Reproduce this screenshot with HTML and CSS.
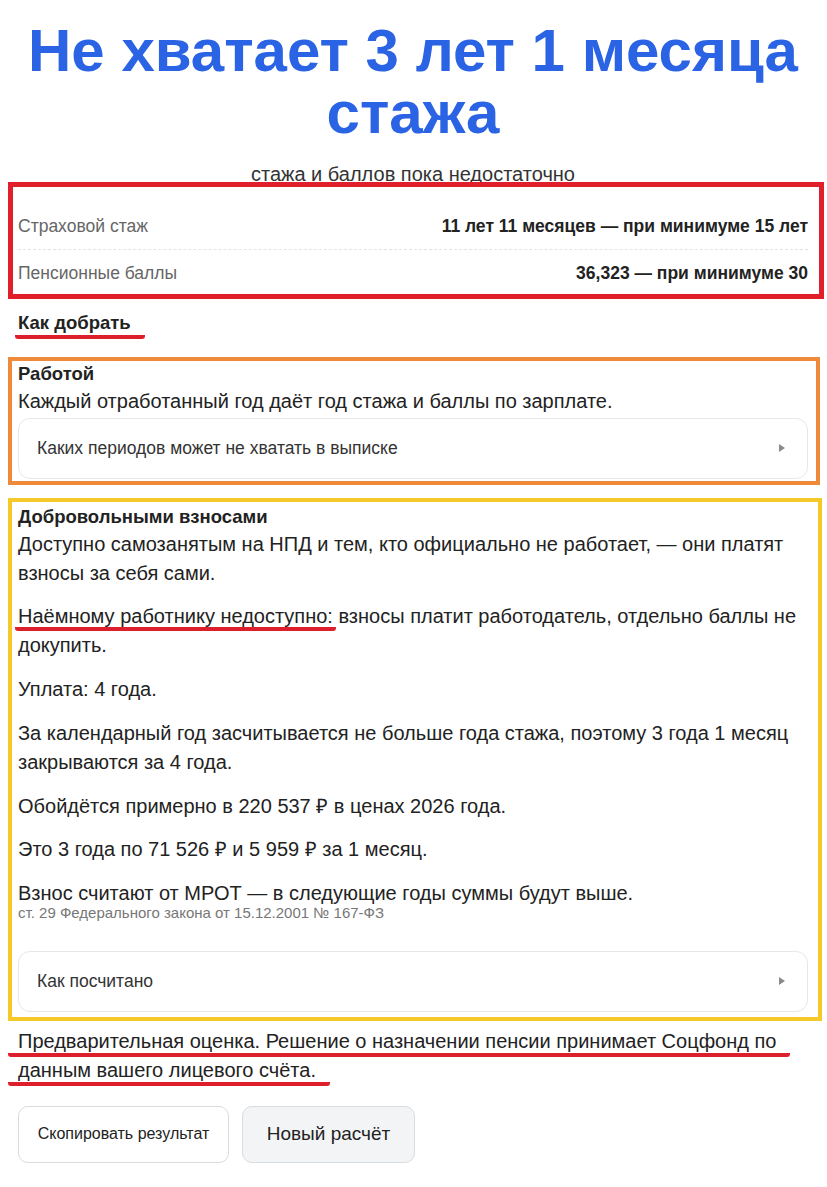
FILE: index.html
```html
<!DOCTYPE html>
<html lang="ru">
<head>
<meta charset="utf-8">
<title>Результат</title>
<link rel="stylesheet" href="styles.css">
</head>
<body>
<main class="page">
  <h1 class="title">Не хватает 3 лет 1 месяца стажа</h1>
  <p class="subtitle">стажа и баллов пока недостаточно</p>

  <section class="summary mark-red">
    <div class="row">
      <span class="label">Страховой стаж</span>
      <span class="value">11 лет 11 месяцев — при минимуме 15 лет</span>
    </div>
    <div class="row">
      <span class="label">Пенсионные баллы</span>
      <span class="value">36,323 — при минимуме 30</span>
    </div>
  </section>

  <h2 class="section-title"><span class="uline">Как добрать</span></h2>

  <section class="option mark-orange">
    <h3 class="option-title">Работой</h3>
    <p class="text">Каждый отработанный год даёт год стажа и баллы по зарплате.</p>
    <details class="disclosure">
      <summary>Каких периодов может не хватать в выписке</summary>
    </details>
  </section>

  <section class="option mark-yellow">
    <h3 class="option-title">Добровольными взносами</h3>
    <p class="text">Доступно самозанятым на НПД и тем, кто официально не работает, — они платят взносы за себя сами.</p>
    <p class="text"><span class="uline">Наёмному работнику недоступно:</span> взносы платит работодатель, отдельно баллы не докупить.</p>
    <p class="text">Уплата: 4 года.</p>
    <p class="text">За календарный год засчитывается не больше года стажа, поэтому 3 года 1 месяц закрываются за 4 года.</p>
    <p class="text">Обойдётся примерно в 220 537 ₽ в ценах 2026 года.</p>
    <p class="text">Это 3 года по 71 526 ₽ и 5 959 ₽ за 1 месяц.</p>
    <p class="text last">Взнос считают от МРОТ — в следующие годы суммы будут выше.</p>
    <p class="cite">ст. 29 Федерального закона от 15.12.2001 № 167-ФЗ</p>
    <details class="disclosure">
      <summary>Как посчитано</summary>
    </details>
  </section>

  <p class="note"><span class="uline wide">Предварительная оценка. Решение о назначении пенсии принимает Соцфонд по данным вашего лицевого счёта.</span></p>

  <div class="actions">
    <button class="btn btn-light" type="button">Скопировать результат</button>
    <button class="btn btn-gray" type="button">Новый расчёт</button>
  </div>
</main>
</body>
</html>
```

FILE: styles.css
```css
* { box-sizing: border-box; }
html, body { margin: 0; padding: 0; background: #fff; }
body {
  font-family: "Liberation Sans", Arial, sans-serif;
  color: #222;
}
.page {
  width: 827px;
  padding: 20px 19px 20px 18px;
}
.title {
  margin: 0;
  text-align: center;
  font-size: 60px;
  line-height: 62px;
  font-weight: 700;
  color: #2a63e3;
}
.subtitle {
  margin: 20px 0 0;
  text-align: center;
  font-size: 20px;
  line-height: 20px;
  color: #333;
}
.mark-red {
  position: relative;
  border: 5px solid #e11f2b;
  margin: -2px -16px 0 -10px;
  padding: 16px 11px 0 5px;
}
.row {
  display: flex;
  justify-content: space-between;
  align-items: center;
  padding: 13px 0;
  font-size: 17.5px;
  line-height: 20px;
}
.row + .row { border-top: 1px dashed #e2e4e8; padding-bottom: 11px; }
.label { color: #666; }
.value { font-weight: 700; color: #222; }
.section-title {
  margin: 13px 0 0;
  font-size: 18.5px;
  line-height: 22px;
  font-weight: 700;
  color: #222;
}
.uline {
  background: linear-gradient(#dd1f2b, #dd1f2b) no-repeat left bottom / 100% 4px;
  padding: 0 3px 4px;
  margin: 0 -3px;
  -webkit-box-decoration-break: clone;
  box-decoration-break: clone;
  border-radius: 3px;
}
.section-title .uline { padding: 0 14px 6px 3px; margin: 0 -14px 0 -3px; }
.uline.wide { padding: 0 14px 5px 10px; margin: 0 -14px 0 -10px; }
.option {
  margin: 23px -12px 0 -10px;
  padding: 2px 8px 2px 6px;
  border: 4px solid #f08a3b;
}
.mark-yellow {
  border-color: #f6c92a;
  margin-top: 13px;
  margin-right: -14px;
  padding: 4px 10px 5px 6px;
}
.option-title {
  margin: 0;
  font-size: 18.5px;
  line-height: 22px;
  font-weight: 700;
  color: #222;
}
.text {
  margin: 2px 0 14.75px;
  font-size: 20px;
  line-height: 29px;
  color: #222;
}
.text + .text { margin-top: 0; }
.mark-orange .text { margin-bottom: 1.5px; }
.text.last { margin-bottom: 0; }
.cite {
  margin: -3.5px 0 30px;
  font-size: 15px;
  line-height: 16px;
  color: #777;
}
.disclosure {
  border: 1px solid #e5e7eb;
  border-radius: 12px;
}
.disclosure summary {
  display: flex;
  justify-content: space-between;
  align-items: center;
  list-style: none;
  padding: 0 22px 0 18px;
  height: 59px;
  font-size: 17.5px;
  color: #333;
  cursor: pointer;
}
.disclosure summary::-webkit-details-marker { display: none; }
.disclosure summary::after {
  content: "";
  width: 0; height: 0;
  border-left: 6px solid #8a8a8a;
  border-top: 4px solid transparent;
  border-bottom: 4px solid transparent;
}
.note {
  margin: 6.5px 0 0;
  font-size: 20px;
  line-height: 29px;
  color: #222;
}
.actions {
  display: flex;
  gap: 13px;
  margin-top: 20.5px;
}
.btn {
  height: 57px;
  border-radius: 10px;
  border: 1px solid #d8dbe0;
  font-family: "Liberation Sans", Arial, sans-serif;
  color: #222;
  padding: 0 18px;
  cursor: pointer;
}
.btn-light { background: #fff; font-size: 16px; width: 211px; }
.btn-gray { background: #f3f4f6; font-size: 19px; width: 173px; }
```
